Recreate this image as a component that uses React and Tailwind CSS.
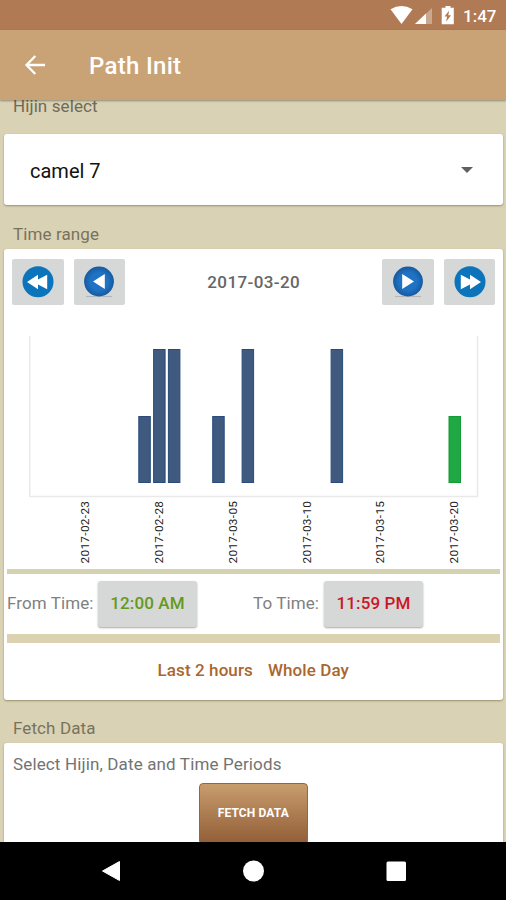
/* =========================================
   CHART DATA
========================================= */
const bars = [
  { x: 138.3, tall: false },
  { x: 153.1, tall: true },
  { x: 167.9, tall: true },
  { x: 212.2, tall: false },
  { x: 241.6, tall: true },
  { x: 330.6, tall: true },
  { x: 448.5, tall: false, selected: true },
];

const dates = [
  { x: 85.2, label: "2017-02-23" },
  { x: 159, label: "2017-02-28" },
  { x: 232.7, label: "2017-03-05" },
  { x: 306.5, label: "2017-03-10" },
  { x: 380, label: "2017-03-15" },
  { x: 454, label: "2017-03-20" },
];

/* =========================================
   STATUS BAR
========================================= */
const StatusBar = () => (
  <div className="h-[30px] shrink-0 bg-[#b07a55] flex items-center justify-end pr-[11px] text-white">
    <svg width="70" height="30" viewBox="0 0 70 30" fill="#fff">
      <path d="M1.500 9.200Q12.500 2.800 23.500 9.200L12.500 24Z" />
      <path d="M43 8V24H26Z" opacity=".35" />
      <path d="M37 13.500V24H26Z" />
      <path d="M56.500 6h5v1.800h3.300v16.500H52.700V7.800h3.800Z" />
      <path d="M60.200 10.500l-4.700 6h2.600l-1 5.200l4.900-6.500h-2.700Z" fill="#b07a55" />
    </svg>
    <span className="ml-[4px] w-[32px] text-[17px] leading-[30px] font-medium whitespace-nowrap pt-px">1:47</span>
  </div>
);

/* =========================================
   DATE NAVIGATION BUTTON
========================================= */
const NavButton = ({ double, forward, label }) => (
  <button
    aria-label={label}
    className="w-[51.5px] h-[46px] bg-[#d6d7d7] rounded-[2px] flex items-center justify-center"
  >
    <svg width="34" height="34" viewBox="0 0 34 34" className={forward ? "" : "-scale-x-100"}>
      <defs>
        <radialGradient id="ball">
          <stop offset="0.6" stopColor="#1f72c4" />
          <stop offset="1" stopColor="#155a9f" />
        </radialGradient>
      </defs>
      {double ? (
        <>
          <circle cx="17" cy="16.800" r="15.500" fill="#0b74bb" />
          <path d="M7.800 9.800L17 14.500V9.800L28 17L17 24.200V19.500L7.800 24.200Z" fill="#fff" />
        </>
      ) : (
        <>
          <path d="M4 31.500H30" stroke="#b4b6b8" strokeWidth="1.200" />
          <circle cx="17" cy="16.500" r="14.900" fill="url(#ball)" />
          <path d="M11.200 9L23 16.500L11.200 24Z" fill="#fff" />
        </>
      )}
    </svg>
  </button>
);

/* =========================================
   BAR CHART
========================================= */
const Chart = () => (
  <svg width="498" height="260" viewBox="4 308 498 260" className="block">
    <path d="M29.700 336V496.500H477.500V336" fill="none" stroke="#e9e9e9" strokeWidth="1.500" />
    {bars.map((bar) => (
      <rect
        key={bar.x}
        x={bar.x + 0.5}
        y={bar.tall ? 349.5 : 416.500}
        width="11.500"
        height={bar.tall ? 133 : 66}
        fill={bar.selected ? "#1fa843" : "#40597f"}
        stroke={bar.selected ? "#129c32" : "#294c7c"}
      />
    ))}
    {dates.map((d) => (
      <text
        key={d.label}
        transform={`translate(${d.x + 4} 563.5) rotate(-90)`}
        textLength="62.500"
        fontSize="11.800"
        fill="#222"
      >
        {d.label}
      </text>
    ))}
  </svg>
);

/* =========================================
   MAIN SCREEN
========================================= */
const App = () => {
  return (
    <div className="w-[506px] h-[900px] overflow-hidden flex flex-col bg-[#dad2b4] font-['Roboto',sans-serif] text-[#737373]">
      <StatusBar />

      {/* ================= APP BAR ================= */}
      <div className="relative h-[70px] shrink-0 bg-[#c9a276] shadow-[0_1px_2px_rgba(0,0,0,0.35)] flex items-center text-white">
        <svg width="22" height="22" viewBox="0 0 22 22" fill="none" stroke="#fff" strokeWidth="2.300" className="ml-[24px] -mt-px">
          <path d="M21 11H3M11.300 2L2.500 11L11.300 20" />
        </svg>
        <h1 className="ml-[43px] pt-px text-[24px] font-medium tracking-[0.3px] whitespace-nowrap">Path Init</h1>
      </div>

      {/* ================= CONTENT ================= */}
      <div className="h-[742px] pl-[4px] pr-[3.5px]">
        <div className="h-[34px] pl-[9px] text-[17px] leading-[12px] tracking-[0.1px] text-[#6f6a57]">Hijin select</div>

        <div className="h-[71px] bg-white rounded-[3px] shadow-[0_1px_2px_rgba(90,80,40,0.5)] flex items-center justify-between pl-[26px] pr-[30px]">
          <span className="pt-[2px] text-[20px] text-[#111]">camel 7</span>
          <svg width="12" height="6" viewBox="0 0 12 6">
            <path d="M0 0H12L6 6Z" fill="#606060" />
          </svg>
        </div>

        <div className="h-[43.500px] pl-[9px] pt-[18px] text-[17px] leading-[22px] tracking-[0.1px] text-[#78725d]">Time range</div>

        <div className="h-[451px] bg-white rounded-[3px] shadow-[0_1px_2px_rgba(90,80,40,0.5)]">
          <div className="h-[59.500px] pt-[10px] pl-[8px] pr-[7px] flex items-start justify-between">
            <div className="flex gap-[10px]">
              <NavButton double label="First" />
              <NavButton label="Previous" />
            </div>
            <span className="text-[17px] leading-[47px] font-medium tracking-[0.4px] text-[#666]">2017-03-20</span>
            <div className="flex gap-[10px]">
              <NavButton forward label="Next" />
              <NavButton double forward label="Last" />
            </div>
          </div>

          <Chart />

          <div className="mt-[0.5px] mx-[3px] h-[5px] bg-[#d4d2b0]" />
          <div className="h-[60px] flex items-center pl-[3px] text-[17px] text-[#808080]">
            <span className="w-[91px] pt-px tracking-[0.1px] whitespace-nowrap">From Time:</span>
            <button className="w-[99px] h-[46px] pt-px rounded-[3px] bg-[#d6d7d7] shadow-[0_1px_2px_rgba(0,0,0,0.35)] font-medium text-[#639a1c] tracking-[0.1px] whitespace-nowrap">12:00 AM</button>
            <span className="ml-[56px] w-[71px] pt-px tracking-[0.1px] whitespace-nowrap">To Time:</span>
            <button className="w-[99px] h-[46px] pt-px rounded-[3px] bg-[#d6d7d7] shadow-[0_1px_2px_rgba(0,0,0,0.35)] font-medium text-[#cc1626] tracking-[0.1px] whitespace-nowrap">11:59 PM</button>
          </div>
          <div className="mx-[3px] h-[9px] bg-[#dad2b1]" />
          <div className="h-[56px] flex items-center justify-center gap-[15px] text-[17px] font-medium tracking-[0.1px] text-[#a9672f]">
            <span>Last 2 hours</span>
            <span>Whole Day</span>
          </div>
        </div>

        <div className="h-[43.500px] pl-[9px] pt-[17px] text-[17px] leading-[22px] tracking-[0.1px] text-[#78725d]">Fetch Data</div>

        <div className="h-[120px] bg-white rounded-[3px] shadow-[0_1px_2px_rgba(90,80,40,0.5)] flex flex-col">
          <p className="pl-[9px] pt-[10px] h-[40px] text-[17px] leading-[22px] tracking-[0.14px]">Select Hijin, Date and Time Periods</p>
          <button className="mx-auto w-[109px] h-[62px] pb-[2px] shrink-0 rounded-[4px] border border-[#96673f] bg-linear-to-b from-[#c89d6e] to-[#915d36] text-[12px] font-bold tracking-[0.12px] text-white">
            FETCH DATA
          </button>
        </div>
      </div>

      {/* ================= SYSTEM NAVIGATION ================= */}
      <div className="relative h-[58px] shrink-0 bg-black">
        <svg width="506" height="58" viewBox="0 842 506 58" fill="#fff">
          <path d="M102.500 871L119.500 861.500V880.500Z" stroke="#fff" strokeLinejoin="round" />
          <circle cx="253.500" cy="871" r="10.500" />
          <rect x="386.500" y="861.500" width="19.500" height="19.500" rx="1.500" />
        </svg>
      </div>
    </div>
  );
};

export default App;
